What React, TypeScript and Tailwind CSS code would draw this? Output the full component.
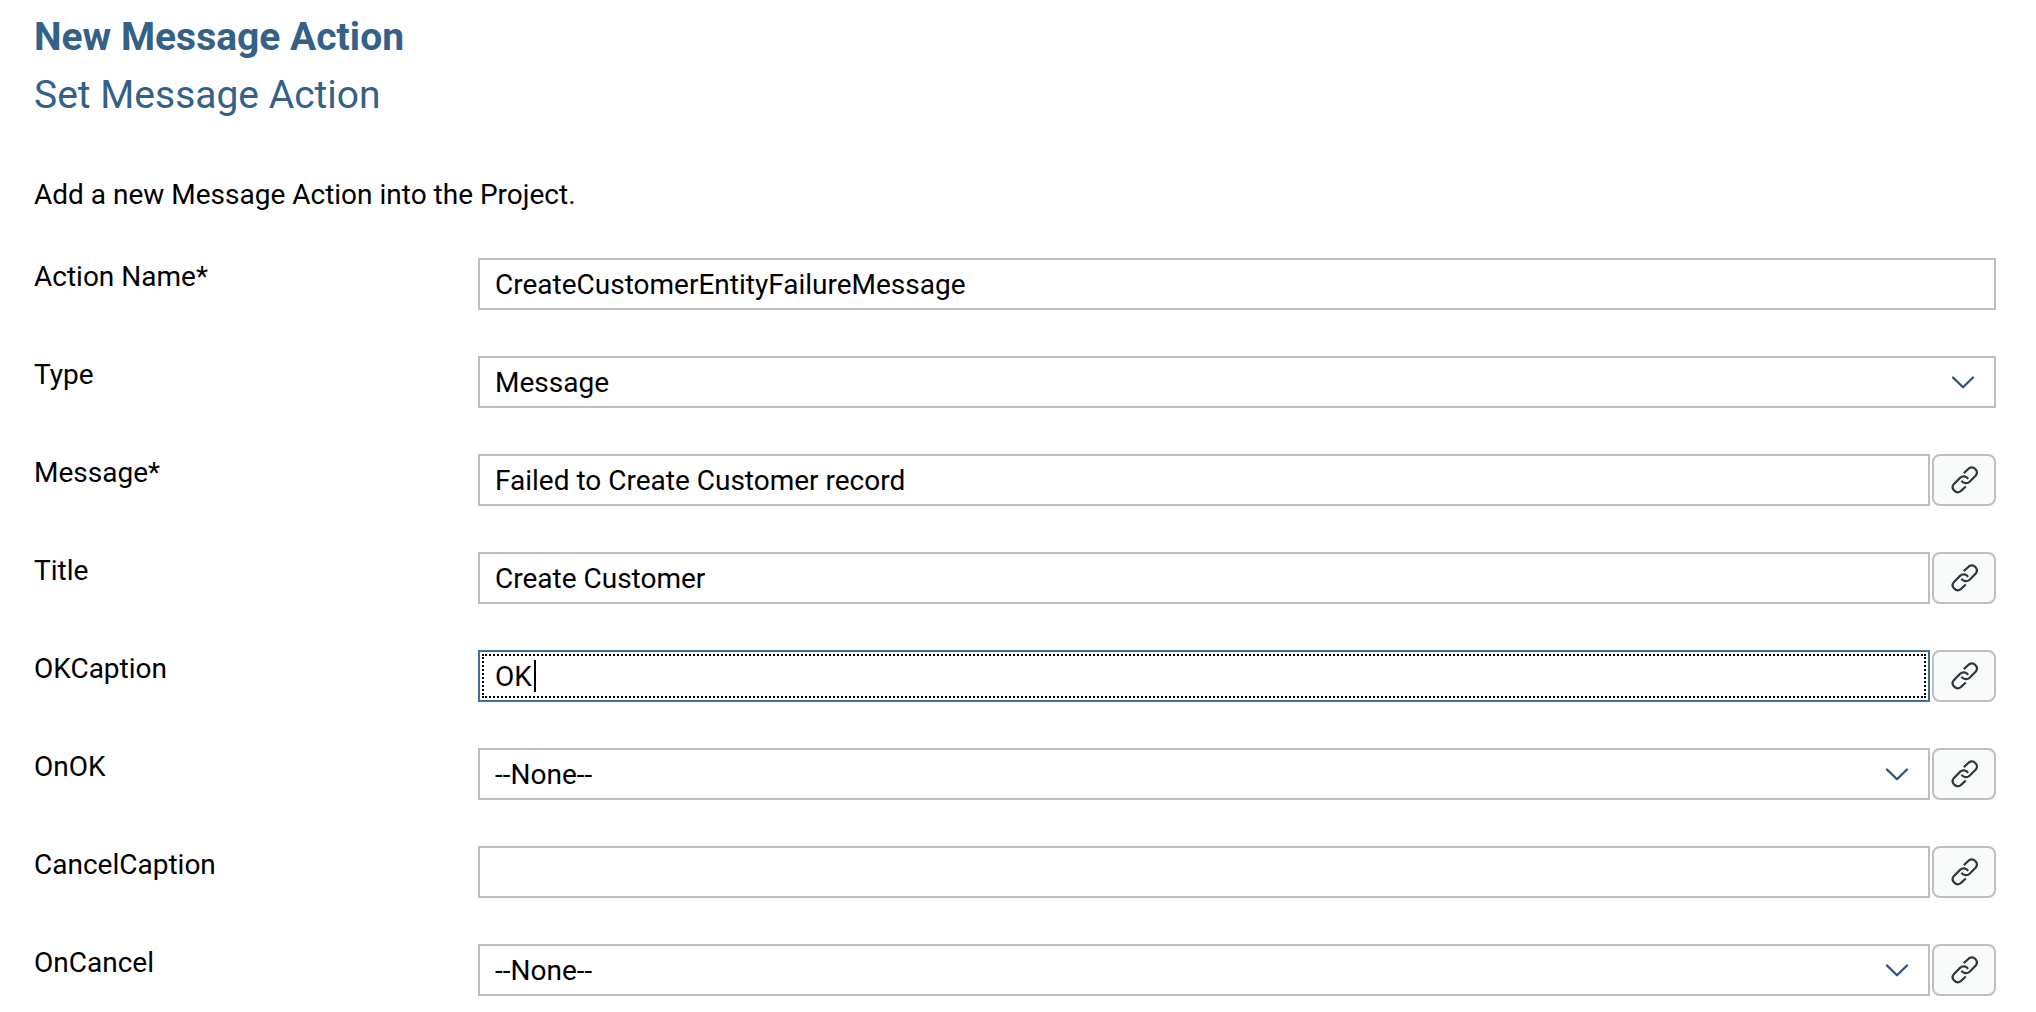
type Field = {
  id: string;
  label: string;
  kind: "text" | "select";
  value: string;
  link: boolean;
  focused?: boolean;
};

const fields: Field[] = [
  { id: "action-name", label: "Action Name*", kind: "text", value: "CreateCustomerEntityFailureMessage", link: false },
  { id: "type", label: "Type", kind: "select", value: "Message", link: false },
  { id: "message", label: "Message*", kind: "text", value: "Failed to Create Customer record", link: true },
  { id: "title", label: "Title", kind: "text", value: "Create Customer", link: true },
  { id: "ok-caption", label: "OKCaption", kind: "text", value: "OK", link: true, focused: true },
  { id: "on-ok", label: "OnOK", kind: "select", value: "--None--", link: true },
  { id: "cancel-caption", label: "CancelCaption", kind: "text", value: "", link: true },
  { id: "on-cancel", label: "OnCancel", kind: "select", value: "--None--", link: true },
];

function LinkIcon() {
  return (
    <svg width="32" height="32" viewBox="-1 -1 32 32" fill="none" stroke="#32363a" strokeWidth="2.2" aria-hidden="true">
      <path d="M14.8 8.1 L19.8 3.5 A5 5 0 0 1 26.8 10.5 L20.6 16.7 A5.2 5.2 0 0 1 12.5 15.7" />
      <path d="M16.8 21.5 L11.8 26.1 A5 5 0 0 1 4.8 19.1 L11 12.9 A5.2 5.2 0 0 1 19.1 13.9" />
    </svg>
  );
}

function Chevron() {
  return (
    <svg
      className="pointer-events-none absolute inset-y-0 right-[21px] my-auto"
      width="24"
      height="14"
      viewBox="0 0 24 14"
      fill="none"
      stroke="#2f5375"
      strokeWidth="2.3"
      strokeLinecap="round"
      strokeLinejoin="round"
      aria-hidden="true"
    >
      <path d="M2 2.5 L12 12.3 L22 2.5" />
    </svg>
  );
}

function Control({ field }: { field: Field }) {
  if (field.kind === "select") {
    return (
      <div className="relative flex-1">
        <select
          id={field.id}
          defaultValue={field.value}
          className="block h-13 w-full appearance-none border-2 border-[#bfbfbf] bg-white px-[15px] pt-0.5 text-[28px] leading-8 text-black"
        >
          <option>{field.value}</option>
        </select>
        <Chevron />
      </div>
    );
  }
  if (field.focused) {
    return (
      <div className="relative flex-1">
        <input
          id={field.id}
          type="text"
          defaultValue={field.value}
          className="block h-13 w-full border-2 border-[#427093] bg-white px-[15px] text-[28px] leading-8 text-black caret-transparent outline-2 -outline-offset-6 outline-dotted outline-black"
        />
        <span className="absolute inset-y-0 left-14 my-auto h-8 w-0.5 bg-black" />
      </div>
    );
  }
  return (
    <div className="flex-1">
      <input
        id={field.id}
        type="text"
        defaultValue={field.value}
        className="block h-13 w-full border-2 border-[#bfbfbf] bg-white px-[15px] text-[28px] leading-8 text-black"
      />
    </div>
  );
}

export default function App() {
  return (
    <main className="min-h-screen bg-white pt-[15px] pr-10 pb-4 pl-[34px] font-[Roboto,sans-serif] text-[28px] leading-8 text-black">
      <h1 className="text-[39px] leading-[44px] font-bold text-[#346187]">New Message Action</h1>
      <h2 className="mt-3 text-[39px] leading-[48px] text-[#346187]">Set Message Action</h2>
      <p className="mt-15">Add a new Message Action into the Project.</p>
      <form className="mt-[47px] flex flex-col gap-[46px]">
        {fields.map((field) => (
          <div key={field.id} className="flex items-start">
            <label htmlFor={field.id} className="mt-[3px] w-[444px] shrink-0">
              {field.label}
            </label>
            <div className="flex flex-1 gap-0.5">
              <Control field={field} />
              {field.link && (
                <button
                  type="button"
                  aria-label={`Bind ${field.label}`}
                  className="flex h-13 w-16 items-center justify-center rounded-lg border-2 border-[#bfbfbf] bg-[#f9fbfa]"
                >
                  <LinkIcon />
                </button>
              )}
            </div>
          </div>
        ))}
      </form>
    </main>
  );
}
